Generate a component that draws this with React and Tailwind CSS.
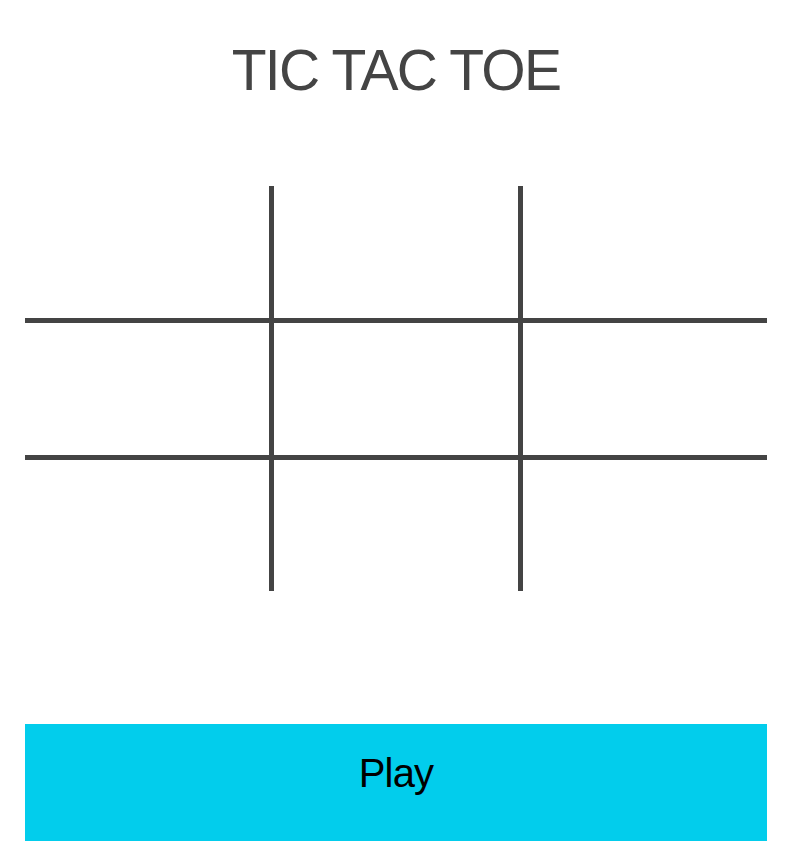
const cells = [
  '',
  'border-x-[5px]',
  '',
  'border-y-[5px]',
  'border-[5px]',
  'border-y-[5px]',
  '',
  'border-x-[5px]',
  '',
];

export default function App() {
  return (
    <div className="min-h-[861px] bg-white pl-[25px] pr-[19px] font-['Liberation_Sans',Arial,sans-serif]">
      <h1 className="pt-[42px] text-center text-[57px] leading-none font-normal tracking-[-1.7px] text-[#444444]">
        TIC TAC TOE
      </h1>

      <div className="mt-[87px] grid grid-cols-[244px_254px_244px] grid-rows-[132px_142px_131px]">
        {cells.map((c, i) => (
          <div key={i} className={`border-[#444444] ${c}`} />
        ))}
      </div>

      <button className="mt-[133px] flex h-[117px] w-full justify-center bg-[#02cdec] pt-[29px] text-[40px] leading-none tracking-[-0.8px] text-black">
        Play
      </button>
    </div>
  );
}
